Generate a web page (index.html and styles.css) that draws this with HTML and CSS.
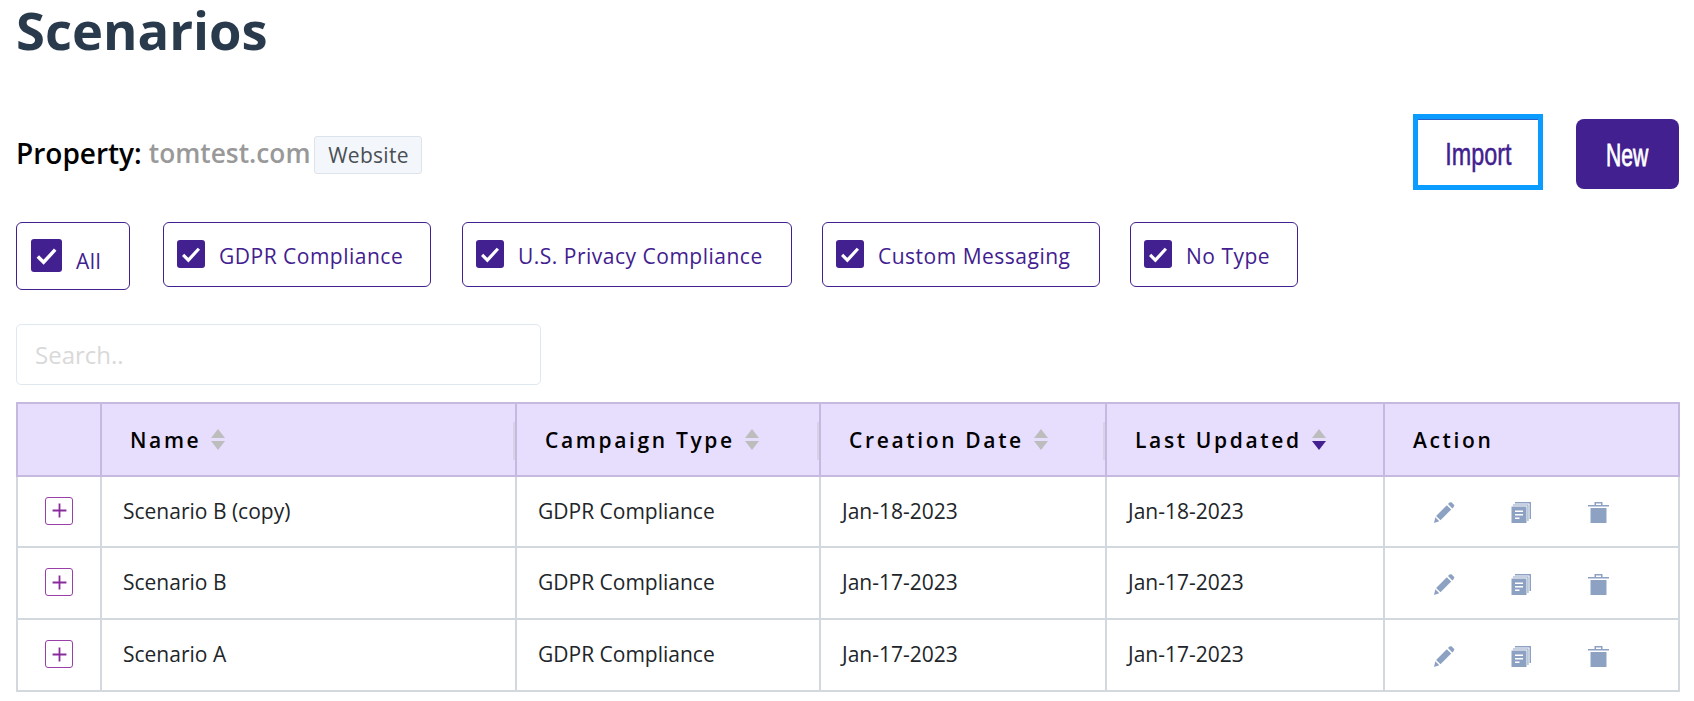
FILE: index.html
```html
<!DOCTYPE html>
<html lang="en">
<head>
<meta charset="utf-8">
<title>Scenarios</title>
<link rel="stylesheet" href="styles.css">
</head>
<body>
<h1 class="title">Scenarios</h1>
<div class="property-row">
  <div class="property">
    <span class="property-label">Property:</span>
    <span class="property-name">tomtest.com</span>
    <span class="badge">Website</span>
  </div>
  <div class="actions">
    <button class="btn btn-import"><span class="btn-label label-import">Import</span></button>
    <button class="btn btn-new"><span class="btn-label label-new">New</span></button>
  </div>
</div>
<div class="filters">
  <label class="pill pill-all"><span class="check check-all"><svg viewBox="0 0 16 16"><path d="M3.5 8.5l3 3 6-6.5"/></svg></span><span class="pill-text pill-text-all">All</span></label>
  <label class="pill pill-gdpr"><span class="check"><svg viewBox="0 0 16 16"><path d="M3.5 8.5l3 3 6-6.5"/></svg></span><span class="pill-text">GDPR Compliance</span></label>
  <label class="pill pill-us"><span class="check"><svg viewBox="0 0 16 16"><path d="M3.5 8.5l3 3 6-6.5"/></svg></span><span class="pill-text">U.S. Privacy Compliance</span></label>
  <label class="pill pill-custom"><span class="check"><svg viewBox="0 0 16 16"><path d="M3.5 8.5l3 3 6-6.5"/></svg></span><span class="pill-text">Custom Messaging</span></label>
  <label class="pill pill-none"><span class="check"><svg viewBox="0 0 16 16"><path d="M3.5 8.5l3 3 6-6.5"/></svg></span><span class="pill-text">No Type</span></label>
</div>
<input class="search" type="text" placeholder="Search..">
<table class="grid">
  <colgroup>
    <col class="c-expand"><col class="c-name"><col class="c-type"><col class="c-created"><col class="c-updated"><col class="c-action">
  </colgroup>
  <thead>
    <tr>
      <th></th>
      <th class="th-handle"><span class="th-in">Name<span class="sorter"><i class="up"></i><i class="down"></i></span></span></th>
      <th class="th-handle"><span class="th-in">Campaign Type<span class="sorter"><i class="up"></i><i class="down"></i></span></span></th>
      <th class="th-handle"><span class="th-in">Creation Date<span class="sorter"><i class="up"></i><i class="down"></i></span></span></th>
      <th><span class="th-in">Last Updated<span class="sorter"><i class="up"></i><i class="down active"></i></span></span></th>
      <th>Action</th>
    </tr>
  </thead>
  <tbody>
    <tr>
      <td class="td-expand"><span class="expand"><svg viewBox="0 0 16 16"><path d="M8 1.5v13M1.5 8h13"/></svg></span></td>
      <td>Scenario B (copy)</td><td>GDPR Compliance</td><td>Jan-18-2023</td><td>Jan-18-2023</td>
      <td><div class="icons">
        <svg class="ico" viewBox="0 0 21 21"><path d="M15.2.8l2-.8 3.2 3.2-.8 2-1.3 1.2-4.3-4.3zM12.8 3.2l4.4 4.4L6.5 18.3l-4.4-4.4zM1.3 15.2l4 4L0 21z"/></svg>
        <svg class="ico" viewBox="0 0 20 21"><path d="M3.5 0H19.5V17H18V1.5H3.5zM1.500 2.500H17V19H15.900V3.600H1.500z"/><path fill-rule="evenodd" d="M0 4.500H15V21H0zM3.500 8.500V10H11.500V8.500zM3.500 12V13.500H11.500V12zM3.500 15.500V17H8V15.500z"/></svg>
        <svg class="ico" viewBox="0 0 21 21"><path fill-rule="evenodd" d="M6.500 3V0H14.500V3H21V4.500H0V3zM8 1.500V3H13V1.500z"/><path d="M2.500 6H18.500V21H2.500z"/></svg>
      </div></td>
    </tr>
    <tr>
      <td class="td-expand"><span class="expand"><svg viewBox="0 0 16 16"><path d="M8 1.5v13M1.5 8h13"/></svg></span></td>
      <td>Scenario B</td><td>GDPR Compliance</td><td>Jan-17-2023</td><td>Jan-17-2023</td>
      <td><div class="icons">
        <svg class="ico" viewBox="0 0 21 21"><path d="M15.2.8l2-.8 3.2 3.2-.8 2-1.3 1.2-4.3-4.3zM12.8 3.2l4.4 4.4L6.5 18.3l-4.4-4.4zM1.3 15.2l4 4L0 21z"/></svg>
        <svg class="ico" viewBox="0 0 20 21"><path d="M3.5 0H19.5V17H18V1.5H3.5zM1.500 2.500H17V19H15.900V3.600H1.500z"/><path fill-rule="evenodd" d="M0 4.500H15V21H0zM3.500 8.500V10H11.500V8.500zM3.500 12V13.500H11.500V12zM3.500 15.500V17H8V15.500z"/></svg>
        <svg class="ico" viewBox="0 0 21 21"><path fill-rule="evenodd" d="M6.500 3V0H14.500V3H21V4.500H0V3zM8 1.500V3H13V1.500z"/><path d="M2.500 6H18.500V21H2.500z"/></svg>
      </div></td>
    </tr>
    <tr>
      <td class="td-expand"><span class="expand"><svg viewBox="0 0 16 16"><path d="M8 1.5v13M1.5 8h13"/></svg></span></td>
      <td>Scenario A</td><td>GDPR Compliance</td><td>Jan-17-2023</td><td>Jan-17-2023</td>
      <td><div class="icons">
        <svg class="ico" viewBox="0 0 21 21"><path d="M15.2.8l2-.8 3.2 3.2-.8 2-1.3 1.2-4.3-4.3zM12.8 3.2l4.4 4.4L6.5 18.3l-4.4-4.4zM1.3 15.2l4 4L0 21z"/></svg>
        <svg class="ico" viewBox="0 0 20 21"><path d="M3.5 0H19.5V17H18V1.5H3.5zM1.500 2.500H17V19H15.900V3.600H1.500z"/><path fill-rule="evenodd" d="M0 4.500H15V21H0zM3.500 8.500V10H11.500V8.500zM3.500 12V13.500H11.500V12zM3.500 15.500V17H8V15.500z"/></svg>
        <svg class="ico" viewBox="0 0 21 21"><path fill-rule="evenodd" d="M6.500 3V0H14.500V3H21V4.500H0V3zM8 1.500V3H13V1.500z"/><path d="M2.500 6H18.500V21H2.500z"/></svg>
      </div></td>
    </tr>
  </tbody>
</table>
</body>
</html>
```

FILE: styles.css
```css
* { box-sizing: border-box; }
html, body { margin: 0; padding: 0; background: #fff; }
body {
  width: 1694px;
  height: 701px;
  overflow: hidden;
  padding: 0 16px;
  font-family: "Open Sans", "Noto Sans", sans-serif;
  color: #212529;
}
.title {
  margin: 0;
  height: 116px;
  font-size: 52.5px;
  line-height: 60px;
  font-weight: 700;
  color: #2a3a4d;
}
.property-row {
  display: flex;
  justify-content: space-between;
  align-items: flex-start;
  height: 106px;
}
.property {
  display: flex;
  align-items: center;
  gap: 4px;
  height: 74px;
}
.property-label {
  font-size: 28px;
  font-weight: 600;
  color: #000;
  margin-right: 3px;
}
.property-name { font-size: 26.3px; font-weight: 600; color: #999; }
.badge {
  display: flex;
  align-items: center;
  justify-content: center;
  width: 108px;
  height: 38px;
  margin-top: 3px;
  background: #f3f7fb;
  border: 1px solid #dde3ea;
  border-radius: 3px;
  font-size: 21px;
  letter-spacing: .3px;
  color: #4a4f55;
}
.actions {
  display: flex;
  align-items: flex-start;
  gap: 38px;
  padding-top: 3px;
  margin-right: -1px;
}
.btn {
  font-family: "Liberation Sans", sans-serif;
  font-size: 32px;
  padding: 0;
  cursor: pointer;
}
.btn-label { display: inline-block; }
.label-import { transform: scaleX(.73); -webkit-text-stroke: .5px #42208f; }
.label-new { transform: scaleX(.66); -webkit-text-stroke: .8px #fff; }
.btn-import {
  width: 120px;
  height: 66px;
  padding-top: 4px;
  background: #fff;
  color: #42208f;
  border: 0;
  border-top: 1px solid #2f5fc8;
  border-radius: 0;
  outline: 5px solid #0a9dff;
  margin: 0 0 0 4px;
}
.btn-new {
  width: 103px;
  height: 70px;
  padding-top: 3px;
  background: #42208f;
  color: #fff;
  border: 0;
  border-radius: 8px;
}
.filters {
  display: flex;
  align-items: flex-start;
  height: 102px;
}
.pill {
  display: flex;
  align-items: center;
  height: 65px;
  border: 1px solid #42208f;
  border-radius: 6px;
  padding-left: 13px;
  font-size: 21px;
  font-weight: 500;
  letter-spacing: .5px;
  color: #42208f;
}
.pill-all { width: 114px; height: 68px; padding-left: 14px; }
.pill-gdpr { width: 268px; margin-left: 33px; }
.pill-us { width: 330px; margin-left: 31px; }
.pill-custom { width: 278px; margin-left: 30px; }
.pill-none { width: 168px; margin-left: 30px; }
.check {
  display: flex;
  width: 28px;
  height: 28px;
  flex: none;
  background: #42208f;
  border-radius: 3px;
  margin-top: -2px;
}
.check-all { width: 31px; height: 33px; }
.check svg { width: 100%; height: 100%; fill: none; stroke: #fff; stroke-width: 1.8; }
.pill-text { margin-left: 14px; padding-top: 2px; }
.pill-text-all { margin-top: 8px; }
.search {
  display: block;
  width: 525px;
  height: 61px;
  padding: 0 18px;
  border: 1px solid #dfe7ef;
  border-radius: 5px;
  font-family: inherit;
  font-size: 24px;
  outline: 0;
}
.search::placeholder { color: #d9d9d9; opacity: 1; }
.grid {
  width: 1662px;
  margin-top: 17px;
  border-collapse: collapse;
  table-layout: fixed;
  font-size: 21px;
  color: #212529;
}
.c-expand { width: 84px; }
.c-name { width: 415px; }
.c-type { width: 304px; }
.c-created { width: 286px; }
.c-updated { width: 278px; }
.c-action { width: 295px; }
.grid th {
  position: relative;
  height: 73px;
  padding: 0 0 0 28px;
  background: #e7defe;
  border: 2px solid #c5b9e0;
  text-align: left;
  font-size: 21px;
  font-weight: 600;
  letter-spacing: 2.65px;
  color: #000;
}
.th-handle::after {
  content: "";
  position: absolute;
  right: 0;
  top: 18px;
  width: 2px;
  height: 38px;
  background: #d8d2e8;
}
.th-in { display: flex; align-items: center; }
.sorter {
  display: flex;
  flex-direction: column;
  gap: 3px;
  margin-left: 10px;
}
.sorter i {
  display: block;
  width: 0;
  height: 0;
  border-left: 7px solid transparent;
  border-right: 7px solid transparent;
}
.sorter .up { border-bottom: 9px solid #bdbdbd; }
.sorter .down { border-top: 9px solid #bdbdbd; }
.sorter .down.active { border-top-color: #42208f; }
.grid td {
  height: 72px;
  padding: 0 0 2px 21px;
  border: 2px solid #d3d8de;
}
.grid .td-expand { padding: 0 0 2px 27px; }
.grid tbody tr:first-child td { height: 71px; }
.expand {
  display: flex;
  align-items: center;
  justify-content: center;
  width: 28px;
  height: 28px;
  border: 1px solid #9b3fa8;
  border-radius: 3px;
}
.expand svg { width: 17px; height: 17px; fill: none; stroke: #8a2a9c; stroke-width: 1.7; }
.icons {
  display: flex;
  align-items: center;
  gap: 56px;
  padding: 4px 0 0 28px;
}
.ico { width: 21px; height: 21px; fill: #8da2c2; flex: none; }
```
